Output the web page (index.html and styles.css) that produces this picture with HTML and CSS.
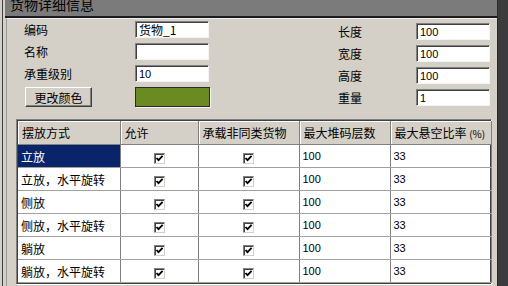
FILE: index.html
```html
<!DOCTYPE html>
<html lang="zh-CN">
<head>
    <meta charset="UTF-8">
    <meta name="viewport" content="width=device-width, initial-scale=1.0">
    <title>货物详细信息</title>
    <link rel="stylesheet" href="styles.css">
</head>
<body>
    <div class="screen">
        <div class="window">
            <div class="titlebar"><span class="title">货物详细信息</span></div>
            <div class="panel">
                <div class="form">
                    <div class="col col-left">
                        <div class="row"><span class="label">编码</span><span class="input">货物_1</span></div>
                        <div class="row"><span class="label">名称</span><span class="input"></span></div>
                        <div class="row"><span class="label">承重级别</span><span class="input">10</span></div>
                        <div class="row row-btn">
                            <span class="label"><button class="btn">更改颜色</button></span>
                            <span class="swatch"></span>
                        </div>
                    </div>
                    <div class="col col-right">
                        <div class="row"><span class="label">长度</span><span class="input">100</span></div>
                        <div class="row"><span class="label">宽度</span><span class="input">100</span></div>
                        <div class="row"><span class="label">高度</span><span class="input">100</span></div>
                        <div class="row"><span class="label">重量</span><span class="input">1</span></div>
                    </div>
                </div>

                <div class="grid-box">
                    <table class="grid">
                        <colgroup>
                            <col style="width:102px">
                            <col style="width:78px">
                            <col style="width:101px">
                            <col style="width:91px">
                            <col style="width:101px">
                        </colgroup>
                        <thead>
                            <tr>
                                <th>摆放方式</th>
                                <th>允许</th>
                                <th>承载非同类货物</th>
                                <th>最大堆码层数</th>
                                <th>最大悬空比率 <span class="num">(%)</span></th>
                            </tr>
                        </thead>
                        <tbody id="rows"></tbody>
                    </table>
                </div>
            </div>
        </div>
        <div class="edge"></div>
    </div>

    <script>
        const modes = ['立放', '立放，水平旋转', '侧放', '侧放，水平旋转', '躺放', '躺放，水平旋转'];
        const check = '<span class="chk"><svg width="9" height="9" viewBox="0 0 9 9"><path d="M1.5 4 L3.5 6.2 L7.6 1.8" fill="none" stroke="#000" stroke-width="1.8"/></svg></span>';
        const tbody = document.getElementById('rows');

        modes.forEach((name, i) => {
            const tr = document.createElement('tr');
            tr.innerHTML =
                '<td class="' + (i === 0 ? 'sel' : '') + '">' + name + '</td>' +
                '<td class="center">' + check + '</td>' +
                '<td class="center">' + check + '</td>' +
                '<td class="num">100</td>' +
                '<td class="num">33</td>';
            tbody.appendChild(tr);
        });
    </script>
</body>
</html>
```

FILE: styles.css
```css
body {
    margin: 0;
    width: 508px;
    height: 286px;
    overflow: hidden;
    background: #d4d0c8;
    font-family: "Noto Sans CJK SC", "Liberation Sans", sans-serif;
    font-size: 12px;
    color: #000;
}

.screen {
    display: flex;
    height: 286px;
}

.window {
    width: 494px;
    margin-left: 2px;
    border-left: 1px solid #404040;
    background: #d4d0c8;
}

.titlebar {
    height: 16px;
    margin-left: 2px;
    background: #7b7b7b;
    border-bottom: 2px solid #1c1c1c;
    overflow: hidden;
}

.title {
    display: block;
    margin: -4px 0 0 5px;
    font-size: 14px;
    line-height: 17px;
    color: #000;
}

.panel {
    margin-left: 3px;
    border-left: 1px solid #9a9a9a;
    border-top: 1px solid #eeeeee;
    height: 267px;
}

.edge {
    flex: 1;
    background: #3c3c3c;
    border-left: 1px solid #2a2a2a;
}

/* form */

.form {
    display: flex;
    padding: 2px 0 0 17px;
}

.col {
    display: flex;
    flex-direction: column;
    gap: 5px;
}

.col-left {
    width: 314px;
}

.col-right {
    margin-top: 2px;
}

.row {
    display: flex;
    align-items: center;
    height: 17px;
}

.row-btn {
    height: 20px;
}

.col-left .label {
    width: 111px;
}

.col-right .label {
    width: 78px;
}

.label {
    line-height: 17px;
}

.input {
    box-sizing: border-box;
    width: 74px;
    height: 17px;
    padding: 1px 0 0 3px;
    background: #fff;
    border-top: 1px solid #808080;
    border-left: 1px solid #808080;
    border-right: 1px solid #f4f4f4;
    border-bottom: 1px solid #f4f4f4;
    box-shadow: inset 1px 1px 0 #404040;
    font-family: "Liberation Sans", "Noto Sans CJK SC", sans-serif;
    font-size: 11px;
    line-height: 14px;
}

.col-left .input:first-child + .input,
.col-left .row:first-child .input {
    font-family: "Noto Sans CJK SC", "Liberation Sans", sans-serif;
    font-size: 12px;
}

.btn {
    box-sizing: border-box;
    width: 67px;
    height: 20px;
    margin-left: 1px;
    padding: 0;
    background: #d4d0c8;
    border-top: 1px solid #fff;
    border-left: 1px solid #fff;
    border-right: 1px solid #404040;
    border-bottom: 1px solid #404040;
    box-shadow: inset -1px -1px 0 #808080;
    font-family: "Noto Sans CJK SC", sans-serif;
    font-size: 12px;
    color: #000;
}

.swatch {
    box-sizing: border-box;
    width: 75px;
    height: 20px;
    background: #6b8a22;
    border: 1px solid #2a2a2a;
    box-shadow: 1px 1px 0 #f4f4f4;
}

/* grid */

.grid-box {
    box-sizing: border-box;
    width: 475px;
    margin: 12px 0 0 9px;
    border-top: 1px solid #808080;
    border-left: 1px solid #808080;
    border-right: 1px solid #404040;
    border-bottom: 1px solid #404040;
    box-shadow: inset 1px 1px 0 #404040, 1px 1px 0 #fff;
    padding: 1px 0 0 1px;
    background: #fff;
}

.grid {
    border-collapse: collapse;
    table-layout: fixed;
    width: 473px;
}

.grid th {
    height: 23px;
    padding: 0 0 0 4px;
    background: #d4d0c8;
    border-right: 1px solid #808080;
    border-bottom: 1px solid #808080;
    box-shadow: inset 1px 1px 0 #fff;
    font-weight: normal;
    text-align: left;
    white-space: nowrap;
}

.grid th .num {
    font-size: 10px;
}

.grid td {
    box-sizing: border-box;
    height: 23px;
    padding: 0 0 0 3px;
    border-right: 1px solid #808080;
    border-bottom: 1px solid #a0a0a0;
    white-space: nowrap;
}

.grid td.num {
    font-family: "Liberation Sans", sans-serif;
    font-size: 11px;
}

.grid td.center {
    text-align: center;
    padding: 0;
}

.grid td.sel {
    background: #0a246a;
    color: #fff;
}

.chk {
    display: inline-block;
    box-sizing: border-box;
    width: 11px;
    height: 11px;
    vertical-align: middle;
    background: #fff;
    border-top: 1px solid #808080;
    border-left: 1px solid #808080;
    border-right: 1px solid #d4d0c8;
    border-bottom: 1px solid #d4d0c8;
    box-shadow: inset 1px 1px 0 #404040;
    line-height: 0;
}

.chk svg {
    display: block;
    margin: 0;
}
```
